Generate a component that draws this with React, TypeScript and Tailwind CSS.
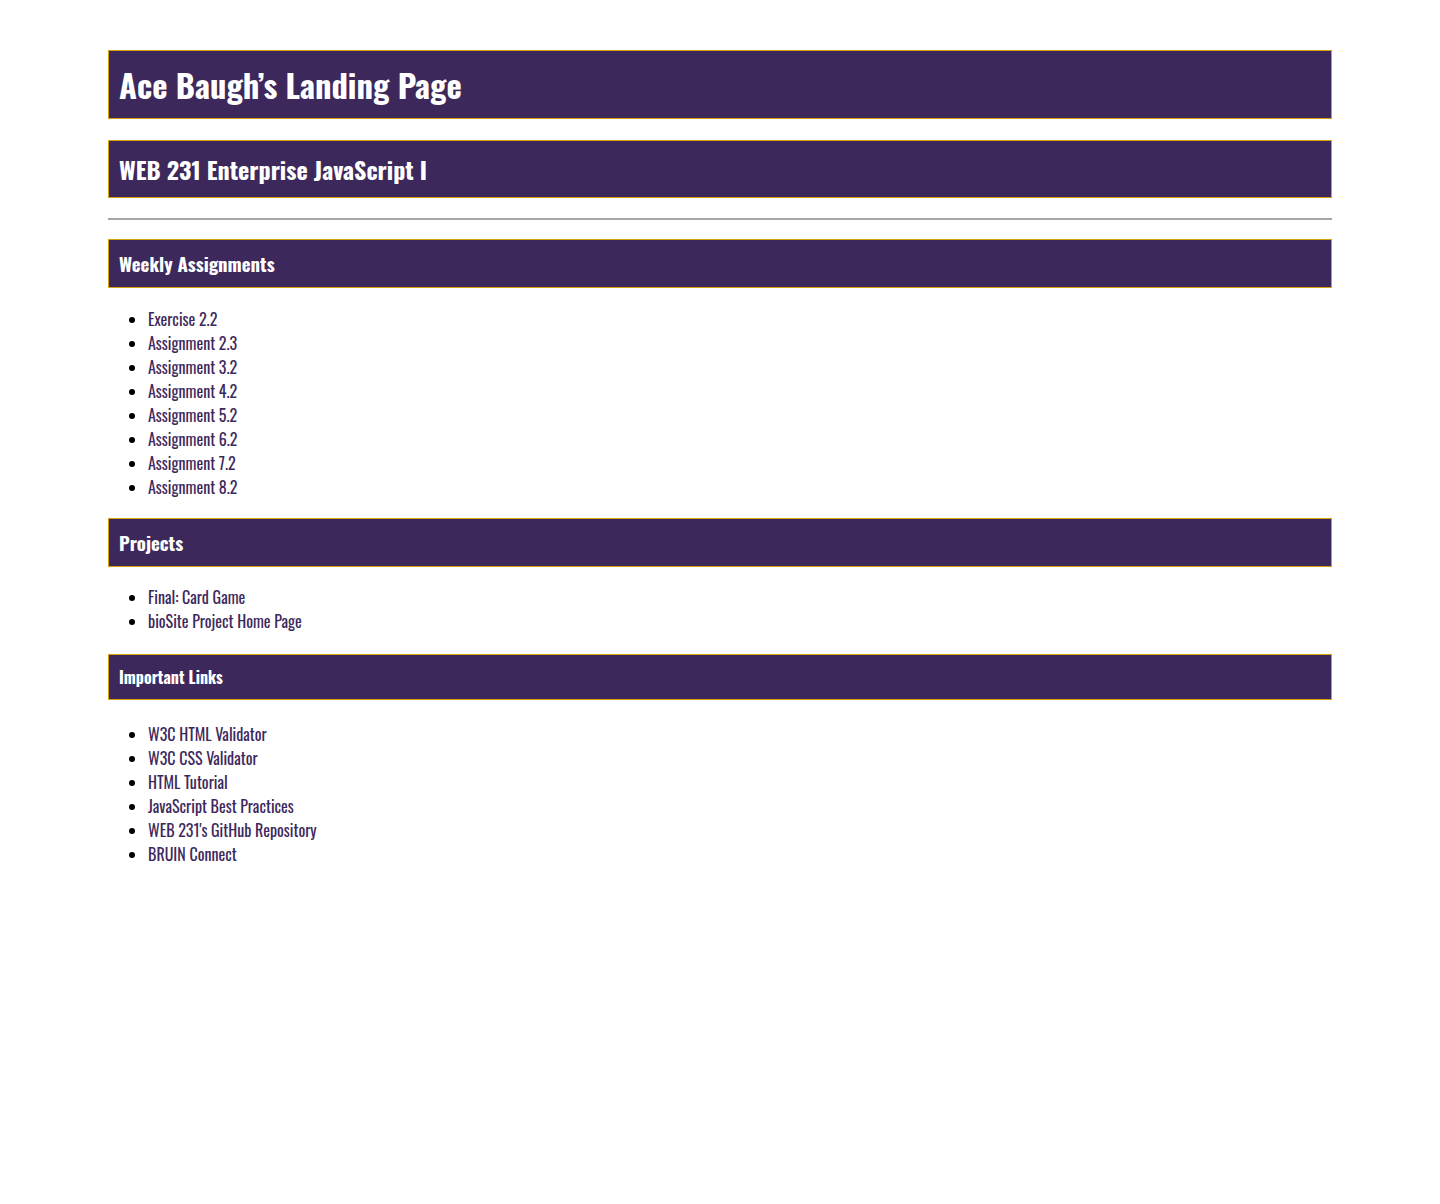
const weekly = [
  'Exercise 2.2',
  'Assignment 2.3',
  'Assignment 3.2',
  'Assignment 4.2',
  'Assignment 5.2',
  'Assignment 6.2',
  'Assignment 7.2',
  'Assignment 8.2',
]

const projects = ['Final: Card Game', 'bioSite Project Home Page']

const links = [
  'W3C HTML Validator',
  'W3C CSS Validator',
  'HTML Tutorial',
  'JavaScript Best Practices',
  "WEB 231's GitHub Repository",
  'BRUIN Connect',
]

const font = "font-['Oswald','Liberation_Sans_Narrow','DejaVu_Sans_Condensed',sans-serif]"

function LinkList({ items, className }: { items: string[]; className: string }) {
  return (
    <ul className={`list-disc pl-10 ${className}`}>
      {items.map((item) => (
        <li key={item} className="text-[16px] font-normal leading-6 marker:text-black">
          <a href="#" className="text-[#3d285c]">
            {item}
          </a>
        </li>
      ))}
    </ul>
  )
}

export default function App() {
  return (
    <div className={`min-h-[1204px] bg-white ${font}`}>
      <main className="mx-auto w-[85%] pt-[50px]">
        <h1 className="border border-[#d4a20b] bg-[#3d285c] px-[10px] py-[10px] text-[32.6px] font-bold leading-[47px] text-white">
          Ace Baugh’s Landing Page
        </h1>
        <h2 className="mt-[21px] border border-[#d4a20b] bg-[#3d285c] px-[10px] py-[10px] text-[24px] font-bold leading-[36px] text-white">
          WEB 231 Enterprise JavaScript I
        </h2>
        <hr className="mt-[20px] border-t-2 border-[#a6a6a6]" />

        <h3 className="mt-[19px] border border-[#d4a20b] bg-[#3d285c] px-[10px] py-[10px] text-[18.8px] font-bold leading-[27px] text-white">
          Weekly Assignments
        </h3>
        <LinkList items={weekly} className="mt-[19px]" />

        <h3 className="mt-[19px] border border-[#d4a20b] bg-[#3d285c] px-[10px] py-[10px] text-[18.8px] font-bold leading-[27px] text-white">
          Projects
        </h3>
        <LinkList items={projects} className="mt-[18px]" />

        <h4 className="mt-[21px] border border-[#d4a20b] bg-[#3d285c] px-[10px] py-[10px] text-[16px] font-bold leading-[24px] text-white">
          Important Links
        </h4>
        <LinkList items={links} className="mt-[22px]" />
      </main>
    </div>
  )
}
